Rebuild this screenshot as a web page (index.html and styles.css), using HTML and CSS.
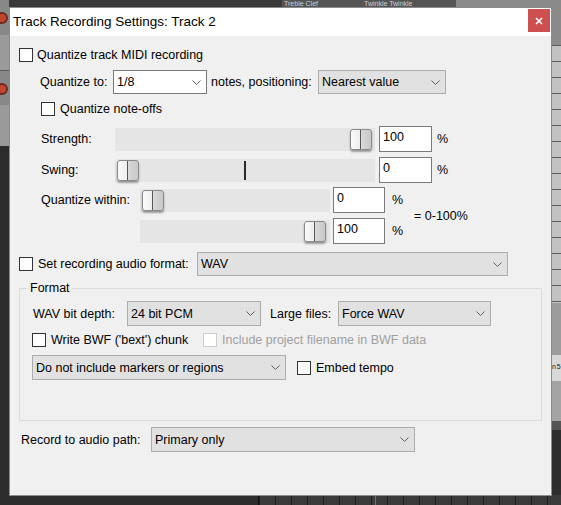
FILE: index.html
```html
<!DOCTYPE html>
<html>
<head>
<meta charset="utf-8">
<title>Track Recording Settings</title>
<link rel="stylesheet" href="styles.css">
</head>
<body>
<div class="desktop">
  <div class="bg bg-top"></div>
  <div class="bg bg-top-tracks"><span class="bg-tname">Treble Clef</span><span class="bg-tname tn2">Twinkle Twinkle</span></div>
  <div class="bg bg-top-right"></div>
  <div class="bg bg-left"><span class="rec rec1"></span><span class="rec rec2"></span></div>
  <div class="bg bg-right"></div>
  <div class="bg bg-right-low"><span class="bg-n">n 5</span></div>
  <div class="bg bg-bottom"></div>

  <div class="dialog">
    <div class="titlebar">
      <span class="title">Track Recording Settings: Track 2</span>
      <span class="close"><svg width="8" height="8" viewBox="0 0 8 8"><path d="M1 1 L7 7 M7 1 L1 7" stroke="#fff" stroke-width="1.6"/></svg></span>
    </div>
    <div class="content">
      <div class="row r1">
        <span class="chk"></span><span>Quantize track MIDI recording</span>
      </div>

      <div class="row r2">
        <span class="lbl w-qto">Quantize to:</span>
        <div class="combo combo-edit w94"><span>1/8</span><svg class="chev" width="9" height="5" viewBox="0 0 9 5"><path d="M0.5 0.5 L4.5 4.5 L8.5 0.5" fill="none" stroke="#606060"/></svg></div>
        <span class="lbl w-notes">notes, positioning:</span>
        <div class="combo w128"><span>Nearest value</span><svg class="chev" width="9" height="5" viewBox="0 0 9 5"><path d="M0.5 0.5 L4.5 4.5 L8.5 0.5" fill="none" stroke="#606060"/></svg></div>
      </div>

      <div class="row r3">
        <span class="chk"></span><span>Quantize note-offs</span>
      </div>

      <div class="row srow r4">
        <span class="lbl w-slbl">Strength:</span>
        <div class="track w260"><span class="thumb" style="left:235px"></span></div>
        <div class="edit">100</div>
        <span class="pct">%</span>
      </div>

      <div class="row srow r5">
        <span class="lbl w-slbl">Swing:</span>
        <div class="track w260"><span class="mark"></span><span class="thumb" style="left:2px"></span></div>
        <div class="edit">0</div>
        <span class="pct">%</span>
      </div>

      <div class="within">
        <span class="lbl within-lbl">Quantize within:</span>
        <div class="track w190 t1"><span class="thumb" style="left:2px"></span></div>
        <div class="edit e52 ed1">0</div>
        <span class="pct p1">%</span>
        <span class="range">= 0-100%</span>
        <div class="track w190 t2"><span class="thumb" style="left:164px"></span></div>
        <div class="edit e52 ed2">100</div>
        <span class="pct p2">%</span>
      </div>

      <div class="row r8">
        <div class="chklbl w178"><span class="chk"></span><span>Set recording audio format:</span></div>
        <div class="combo w311"><span>WAV</span><svg class="chev" width="9" height="5" viewBox="0 0 9 5"><path d="M0.5 0.5 L4.5 4.5 L8.5 0.5" fill="none" stroke="#606060"/></svg></div>
      </div>

      <div class="group">
        <span class="legend">Format</span>
        <div class="row g1">
          <span class="lbl w94">WAV bit depth:</span>
          <div class="combo w134 h25"><span>24 bit PCM</span><svg class="chev" width="9" height="5" viewBox="0 0 9 5"><path d="M0.5 0.5 L4.5 4.5 L8.5 0.5" fill="none" stroke="#606060"/></svg></div>
          <span class="lbl w-large">Large files:</span>
          <div class="combo w153 h25"><span>Force WAV</span><svg class="chev" width="9" height="5" viewBox="0 0 9 5"><path d="M0.5 0.5 L4.5 4.5 L8.5 0.5" fill="none" stroke="#606060"/></svg></div>
        </div>
        <div class="row g2">
          <div class="chklbl w171"><span class="chk"></span><span>Write BWF ('bext') chunk</span></div>
          <div class="chklbl disabled"><span class="chk"></span><span>Include project filename in BWF data</span></div>
        </div>
        <div class="row g3">
          <div class="combo w254 h25"><span>Do not include markers or regions</span><svg class="chev" width="9" height="5" viewBox="0 0 9 5"><path d="M0.5 0.5 L4.5 4.5 L8.5 0.5" fill="none" stroke="#606060"/></svg></div>
          <div class="chklbl embed"><span class="chk"></span><span>Embed tempo</span></div>
        </div>
      </div>

      <div class="row rrec">
        <span class="lbl w130">Record to audio path:</span>
        <div class="combo w264 h25"><span>Primary only</span><svg class="chev" width="9" height="5" viewBox="0 0 9 5"><path d="M0.5 0.5 L4.5 4.5 L8.5 0.5" fill="none" stroke="#606060"/></svg></div>
      </div>
    </div>
  </div>
</div>
</body>
</html>
```

FILE: styles.css
```css
* { box-sizing: border-box; }
html, body { margin: 0; padding: 0; }
body {
  width: 561px;
  height: 505px;
  overflow: hidden;
  background: #2d2d2d;
  font-family: "Liberation Sans", Arial, sans-serif;
  font-size: 12.5px;
  color: #000;
}
.desktop { position: relative; width: 561px; height: 505px; overflow: hidden; }

/* background (DAW behind the window) */
.bg { position: absolute; }
.bg-top { left: 0; top: 0; width: 561px; height: 7px; background: #3a3a3a; }
.bg-top-tracks {
  left: 282px; top: 0; width: 174px; height: 7px; background: #555;
  color: #cfcfcf; font-size: 7px; line-height: 7px; white-space: nowrap;
}
.bg-tname { position: absolute; top: 0; left: 2px; }
.bg-tname.tn2 { left: 82px; }
.bg-top-right { left: 456px; top: 0; width: 105px; height: 45px; background: #8a8a8a; }
.bg-left {
  left: 0; top: 0; width: 9px; height: 146px; overflow: hidden;
  background:
    linear-gradient(#5a5a5a, #5a5a5a) 0 70px / 9px 1px no-repeat,
    linear-gradient(#888 0 35px, #9a9a9a 35px 70px, #888 70px 105px, #9a9a9a 105px 146px);
}
.rec { position: absolute; left: -4px; width: 12px; height: 12px; border-radius: 50%; background: #c0462f; border: 2px solid #6e2a1f; }
.rec1 { top: 12px; }
.rec2 { top: 83px; }
.bg-right {
  left: 552px; top: 45px; width: 9px; height: 258px;
  background: repeating-linear-gradient(#5c5c5c 0 1px, #c2c2c2 1px 16px);
}
.bg-right-low {
  left: 552px; top: 303px; width: 9px; height: 127px;
  background: linear-gradient(#9c9c9c 0 52px, #d8d8d8 52px 78px, #a4a4a4 78px 118px, #555 118px 127px);
}
.bg-n {
  position: absolute; left: 0; top: 60px;
  font-size: 7px; line-height: 8px; letter-spacing: -0.5px;
  white-space: nowrap; color: #222;
}
.bg-bottom {
  left: 258px; top: 495px; width: 303px; height: 10px;
  background:
    linear-gradient(#2d8f84, #2d8f84) 116px 0 / 1px 10px no-repeat,
    repeating-linear-gradient(90deg, #1e1e1e 0 1px, #3b3b3b 1px 16px);
  border-left: 1px solid #111;
}

/* dialog window */
.dialog {
  position: absolute;
  left: 9px; top: 7px;
  width: 543px; height: 489px;
  background: #f0f0f0;
  border: 1px solid #8c8c8c;
  display: flex;
  flex-direction: column;
}
.titlebar {
  height: 28px;
  background: #fff;
  display: flex;
  align-items: flex-start;
  flex: none;
}
.title {
  font-size: 13.5px;
  line-height: 28px;
  padding-left: 3px;
  color: #000;
}
.close {
  margin-left: auto;
  margin-right: 1px;
  margin-top: 1px;
  width: 22px;
  height: 23px;
  background: #cd4f4f;
  display: flex;
  align-items: center;
  justify-content: center;
}

.content { display: flex; flex-direction: column; flex: 1; }
.row { display: flex; align-items: center; flex: none; }
.lbl { white-space: nowrap; flex: none; }
.chk {
  width: 14px; height: 14px; flex: none;
  border: 1px solid #333;
  background: #fff;
  margin-right: 4px;
}
.chklbl { display: flex; align-items: center; white-space: nowrap; flex: none; }
.disabled { color: #a0a0a0; }
.disabled .chk { border-color: #cccccc; }

.combo {
  height: 24px;
  border: 1px solid #adadad;
  background: #e1e1e1;
  display: flex;
  align-items: center;
  padding-left: 3px;
  flex: none;
  white-space: nowrap;
}
.combo-edit { background: #fff; border-color: #7a7a7a; }
.chev { margin-left: auto; margin-right: 5px; flex: none; }
.h25 { height: 25px; }

.edit {
  width: 53px; height: 26px; flex: none;
  border: 1px solid #7a7a7a;
  background: #fff;
  padding: 3px 0 0 3px;
  line-height: 15px;
}
.e52 { width: 52px; }
.pct { flex: none; }

.track {
  position: relative;
  height: 23px;
  background: #e5e5e5;
  flex: none;
}
.thumb {
  position: absolute;
  top: 1px;
  width: 22px;
  height: 21px;
  border: 1px solid #8a8a8a;
  border-radius: 3px;
  background: linear-gradient(90deg, #fafafa 0%, #eeeeee 45%, #d6d6d6 55%, #c9c9c9 100%);
  box-shadow: 0 2px 2px rgba(0, 0, 0, 0.35);
}
.thumb::after {
  content: "";
  position: absolute;
  left: 9px; top: 0;
  width: 1px; height: 19px;
  background: #555;
}
.mark {
  position: absolute;
  left: 129px; top: 2px;
  width: 2px; height: 19px;
  background: #2a2a2a;
}

/* widths */
.w94 { width: 94px; }
.w128 { width: 128px; }
.w130 { width: 130px; }
.w134 { width: 134px; }
.w153 { width: 153px; }
.w171 { width: 171px; }
.w178 { width: 178px; }
.w190 { width: 190px; }
.w254 { width: 254px; }
.w260 { width: 260px; }
.w264 { width: 264px; }
.w311 { width: 311px; }
.w-qto { width: 73px; }
.w-notes { width: 107px; margin-left: 4px; }
.w-slbl { width: 74px; }
.w-large { width: 68px; margin-left: 9px; }

/* rows, vertical rhythm */
.r1 { margin: 12px 0 0 9px; height: 14px; }
.r2 { margin: 8px 0 0 30px; height: 24px; }
.r3 { margin: 8px 0 0 31px; height: 14px; }
.r3 .chk { margin-right: 5px; }
.r4 { margin: 10px 0 0 31px; height: 26px; }
.r5 { margin: 5px 0 0 31px; height: 26px; }
.srow .edit { margin-left: 4px; }
.srow .pct { margin-left: 5px; }

.within {
  margin: 4px 0 0 31px;
  display: grid;
  grid-template-columns: 99px 190px 55px 29px auto;
  grid-template-rows: 26px 26px;
  row-gap: 5px;
  align-items: center;
}
.within-lbl { grid-column: 1; grid-row: 1; }
.t1 { grid-column: 2; grid-row: 1; }
.t2 { grid-column: 2; grid-row: 2; }
.ed1 { grid-column: 3; grid-row: 1; margin-left: 3px; }
.ed2 { grid-column: 3; grid-row: 2; margin-left: 3px; }
.p1 { grid-column: 4; grid-row: 1; padding-left: 7px; }
.p2 { grid-column: 4; grid-row: 2; padding-left: 7px; }
.range { grid-column: 5; grid-row: 1 / 3; white-space: nowrap; }

.r8 { margin: 8px 0 0 9px; height: 24px; }
.r8 .chk { margin-right: 5px; }

.group {
  position: relative;
  margin: 12px 0 0 9px;
  width: 523px;
  height: 133px;
  border: 1px solid #dcdcdc;
  flex: none;
}
.legend {
  position: absolute;
  left: 8px; top: -8px;
  padding: 0 2px;
  line-height: 15px;
  background: #f0f0f0;
}
.g1 { margin: 12px 0 0 13px; height: 25px; }
.g2 { margin: 7px 0 0 12px; height: 14px; }
.g2 .chk { margin-right: 5px; }
.g3 { margin: 8px 0 0 12px; height: 25px; }
.embed { margin-left: 11px; }
.embed .chk { margin-right: 5px; }

.rrec { margin: 6px 0 0 11px; height: 25px; }
```
